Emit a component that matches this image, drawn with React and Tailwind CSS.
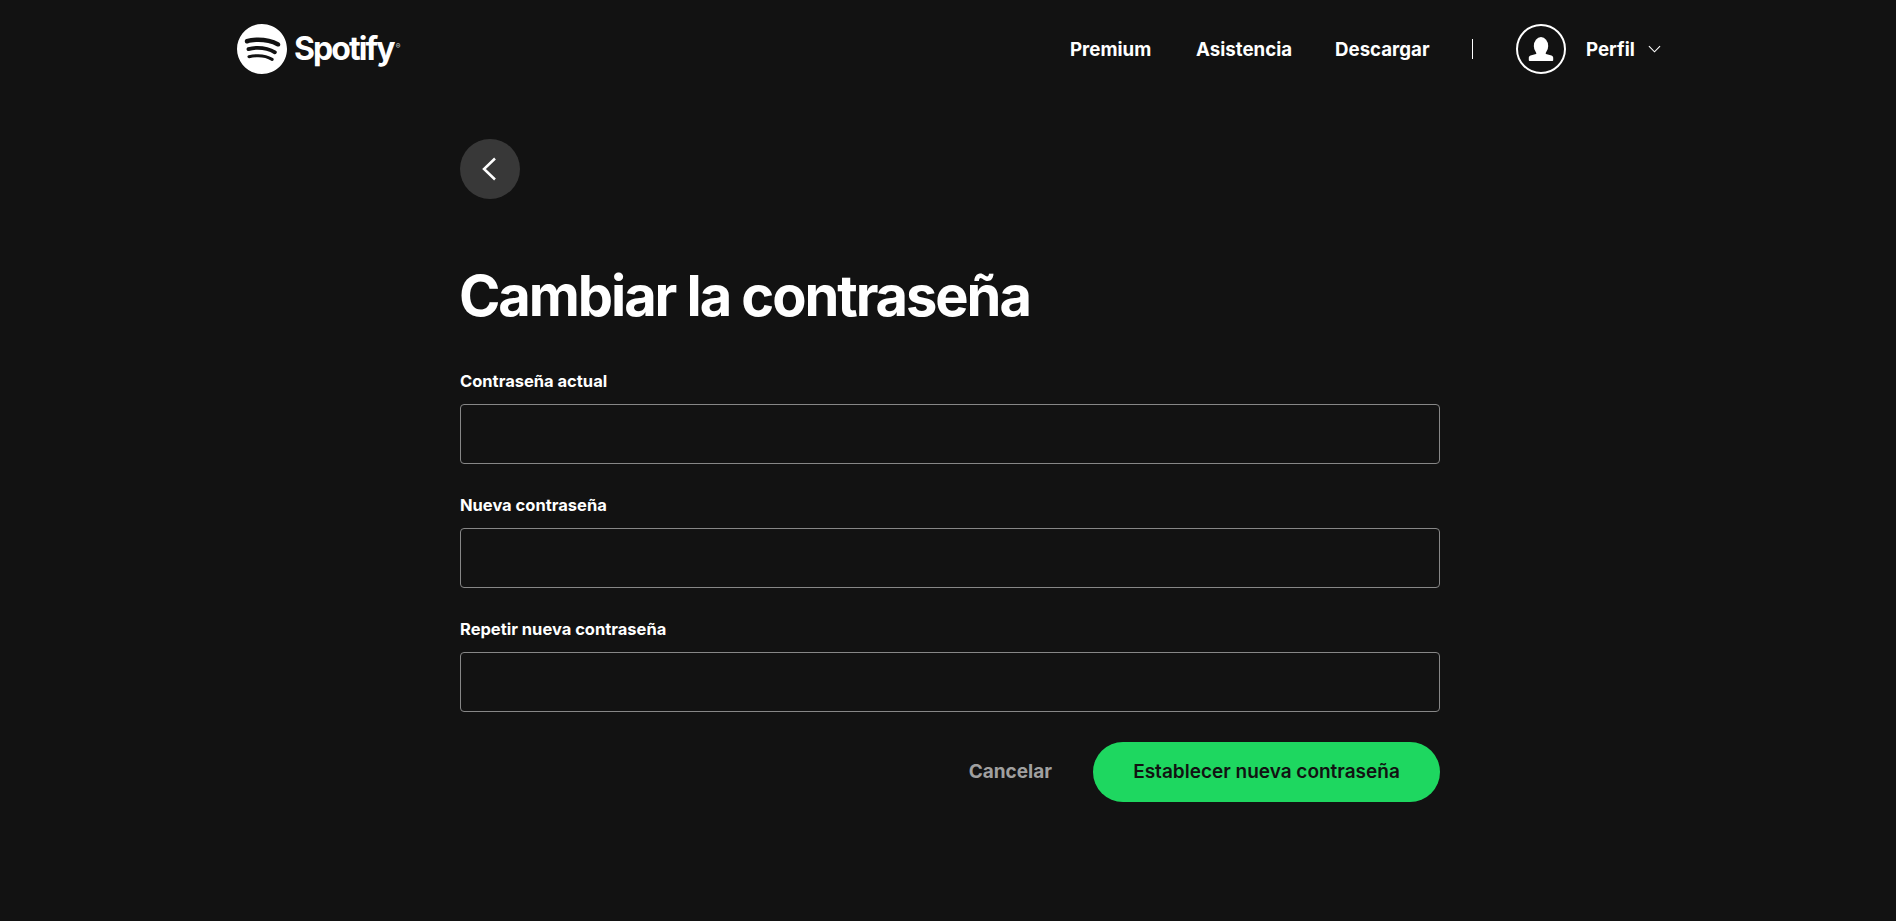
import React from "react";
import { SiSpotify } from "react-icons/si";

const fields = ["Contraseña actual", "Nueva contraseña", "Repetir nueva contraseña"];

function Header() {
  return (
    <header className="flex items-center h-[98px] pl-[237px] pr-[235px]">
      <a href="#" className="flex items-center gap-[7px] text-white">
        <SiSpotify className="w-[50px] h-[50px]" />
        <span className="flex items-start text-[32px] font-bold tracking-[-0.06em] leading-none">
          Spotify
          <span className="ml-[2px] mt-[10px] text-[7px] tracking-normal text-[#c8c8c8]">®</span>
        </span>
      </a>
      <nav className="ml-auto flex items-center text-[18.7px] font-bold text-white">
        <a href="#" className="w-[82px] pt-[2px]">Premium</a>
        <a href="#" className="ml-[44px] w-[95px] pt-[2px]">Asistencia</a>
        <a href="#" className="ml-[44px] w-[95px] pt-[2px]">Descargar</a>
        <div className="ml-[42px] w-px h-5 bg-white" />
        <div className="ml-[43px] flex items-center">
          <div className="w-[50px] h-[50px] rounded-full border-2 border-white flex items-center justify-center">
            <svg viewBox="0 0 26 25" className="w-[26px] h-[25px]" fill="white">
              <ellipse cx="13" cy="9" rx="7.2" ry="9" />
              <path d="M9 15h8l1 2 5.5 1.6c1.2.4 1.7 1.3 1.7 2.4v2c0 .6-.4 1-1 1H1.8c-.6 0-1-.4-1-1v-2c0-1.1.5-2 1.7-2.4L8 17z" />
            </svg>
          </div>
          <span className="ml-[20px] w-[48px] pt-[2px]">Perfil</span>
          <svg viewBox="0 0 14 8" className="ml-[14px] w-[13px] h-[8px]" fill="none" stroke="white" strokeWidth="1.2">
            <path d="M1 1l6 6 6-6" />
          </svg>
        </div>
      </nav>
    </header>
  );
}

export default function App() {
  return (
    <div className="min-h-[921px] bg-[#121212] text-white" style={{ fontFamily: "Inter, sans-serif" }}>
      <Header />
      <main className="ml-[460px] w-[980px] pt-[41px]">
        <button className="w-[60px] h-[60px] rounded-full bg-[#383838] flex items-center justify-center">
          <svg viewBox="0 0 14 24" className="mr-[3px] w-[14px] h-[24px]" fill="none" stroke="white" strokeWidth="2.5">
            <path d="M13 1.5L2 12l11 10.5" />
          </svg>
        </button>
        <h1 className="mt-[62px] -ml-px text-[56px] leading-[70px] font-bold tracking-[-0.037em]">Cambiar la contraseña</h1>
        <form className="mt-[38px]">
          {fields.map((label) => (
            <div key={label} className="mb-[29px]">
              <label className="block text-[16.5px] leading-6 font-bold mb-[11px]">{label}</label>
              <input type="password" className="block w-full h-[60px] rounded border border-[#878787] bg-[#121212]" />
            </div>
          ))}
          <div className="flex items-center justify-end pt-px">
            <button type="button" className="text-[19px] font-bold text-[#a0a0a0]">Cancelar</button>
            <button type="button" className="ml-[41px] w-[347px] h-[60px] rounded-full bg-[#1ed760] text-[19px] font-semibold text-[#121212]">
              Establecer nueva contraseña
            </button>
          </div>
        </form>
      </main>
    </div>
  );
}
